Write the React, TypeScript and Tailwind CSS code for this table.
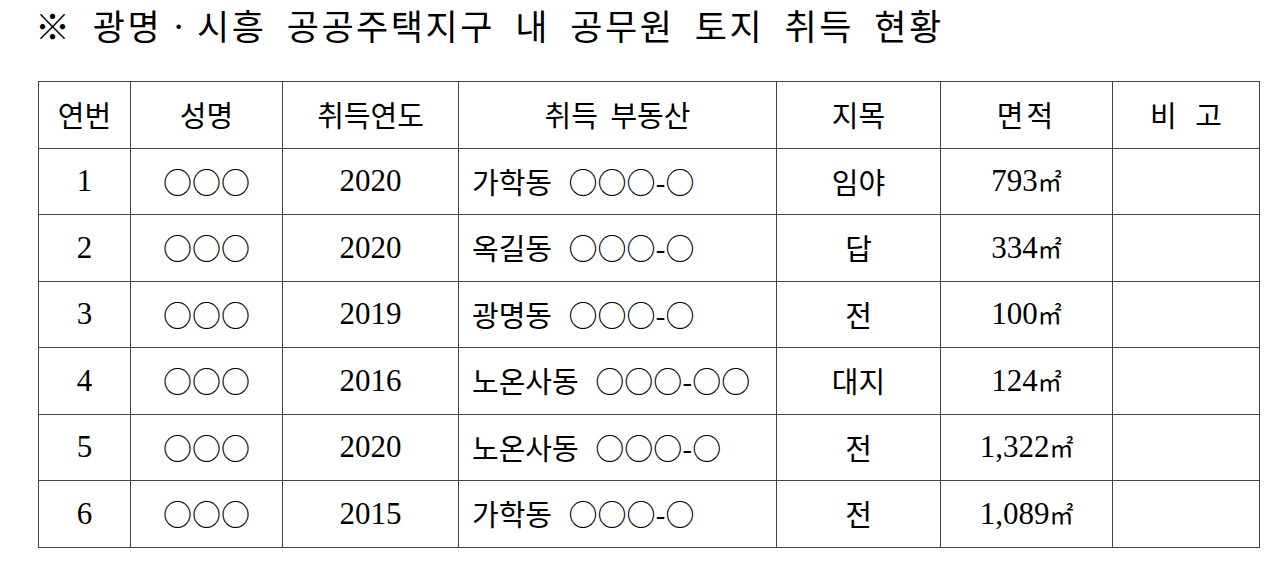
const rows = [
  { no: "1", name: "○○○", year: "2020", land: "가학동 ○○○-○", kind: "임야", area: "793" },
  { no: "2", name: "○○○", year: "2020", land: "옥길동 ○○○-○", kind: "답", area: "334" },
  { no: "3", name: "○○○", year: "2019", land: "광명동 ○○○-○", kind: "전", area: "100" },
  { no: "4", name: "○○○", year: "2016", land: "노온사동 ○○○-○○", kind: "대지", area: "124" },
  { no: "5", name: "○○○", year: "2020", land: "노온사동 ○○○-○", kind: "전", area: "1,322" },
  { no: "6", name: "○○○", year: "2015", land: "가학동 ○○○-○", kind: "전", area: "1,089" },
]

const kr = "font-['Noto_Sans_CJK_KR',sans-serif]"
const num = "font-['Liberation_Serif','Noto_Sans_CJK_KR',serif]"

const App = () => {
  return (
    <div className="w-[1280px] h-[581px] bg-white text-black overflow-hidden">
      <h1 className={`${kr} pl-[35px] h-[81px] text-[35px] leading-[50px] tracking-[2.5px] [word-spacing:10px] font-normal`}>
        ※ 광명ㆍ시흥 공공주택지구 내 공무원 토지 취득 현황
      </h1>
      <table className="ml-[38px] w-[1221px] border-collapse table-fixed">
        <colgroup>
          <col className="w-[92px]" />
          <col className="w-[152px]" />
          <col className="w-[176px]" />
          <col className="w-[318px]" />
          <col className="w-[164px]" />
          <col className="w-[172px]" />
          <col className="w-[147px]" />
        </colgroup>
        <thead>
          <tr className={`h-[66.5px] ${kr} text-[29px]`}>
            <th className="border border-[#444] font-normal">연번</th>
            <th className="border border-[#444] font-normal">성명</th>
            <th className="border border-[#444] font-normal">취득연도</th>
            <th className="border border-[#444] font-normal [word-spacing:6px]">취득 부동산</th>
            <th className="border border-[#444] font-normal">지목</th>
            <th className="border border-[#444] font-normal tracking-[3px]">면적</th>
            <th className="border border-[#444] font-normal [word-spacing:12px]">비 고</th>
          </tr>
        </thead>
        <tbody>
          {rows.map((r) => (
            <tr key={r.no} className="h-[66.5px]">
              <td className={`border border-[#444] text-center ${num} text-[31px]`}>{r.no}</td>
              <td className={`border border-[#444] text-center ${kr} text-[29px]`}>{r.name}</td>
              <td className={`border border-[#444] text-center ${num} text-[31px]`}>{r.year}</td>
              <td className={`border border-[#444] pl-[13px] ${kr} text-[29px] [word-spacing:10px]`}>{r.land}</td>
              <td className={`border border-[#444] text-center ${kr} text-[29px]`}>{r.kind}</td>
              <td className={`border border-[#444] text-center ${num} text-[31px]`}>
                {r.area}
                <span className={`${kr} text-[24px]`}>㎡</span>
              </td>
              <td className="border border-[#444]"></td>
            </tr>
          ))}
        </tbody>
      </table>
    </div>
  )
}

export default App
